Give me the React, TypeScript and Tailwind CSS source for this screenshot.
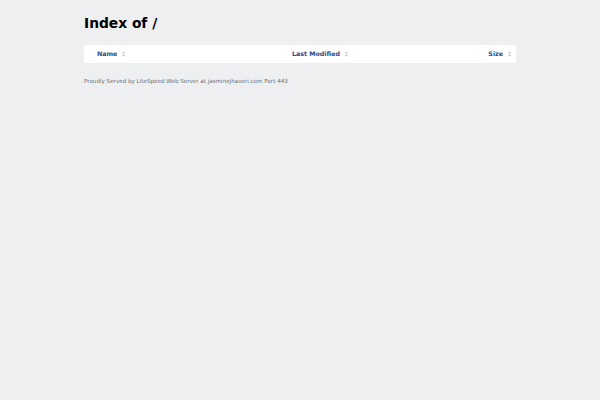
import React from 'react';

const SortIcon: React.FC = () => (
  <svg width="3" height="6" viewBox="0 0 3 6" className="ml-[5px]">
    <path d="M1.5 0.5 L3 2.3 H0 Z" fill="#b8bcc4" />
    <path d="M1.5 5.5 L3 3.7 H0 Z" fill="#b8bcc4" />
  </svg>
);

const App: React.FC = () => {
  return (
    <div className="min-h-screen w-full bg-[#eeeff1] font-['DejaVu_Sans',sans-serif]">
      <div className="ml-[84px] w-[432px] pt-[13px]">
        <h1 className="text-[13.8px] font-bold leading-[20px] text-black">Index of /</h1>
        <div className="mt-[12px] flex h-[18px] items-center bg-white pl-[13px] pr-[5px] text-[6.3px] font-bold text-[#1b4c8e]">
          <div className="flex w-[195px] items-center">
            <span>Name</span>
            <SortIcon />
          </div>
          <div className="flex flex-1 items-center">
            <span>Last Modified</span>
            <SortIcon />
          </div>
          <div className="flex items-center">
            <span>Size</span>
            <SortIcon />
          </div>
        </div>
        <p className="mt-[14px] text-[5.6px] leading-[8px] text-[#6b6e73]">
          Proudly Served by LiteSpeed Web Server at jasminejhaveri.com Port 443
        </p>
      </div>
    </div>
  );
};

export default App;
